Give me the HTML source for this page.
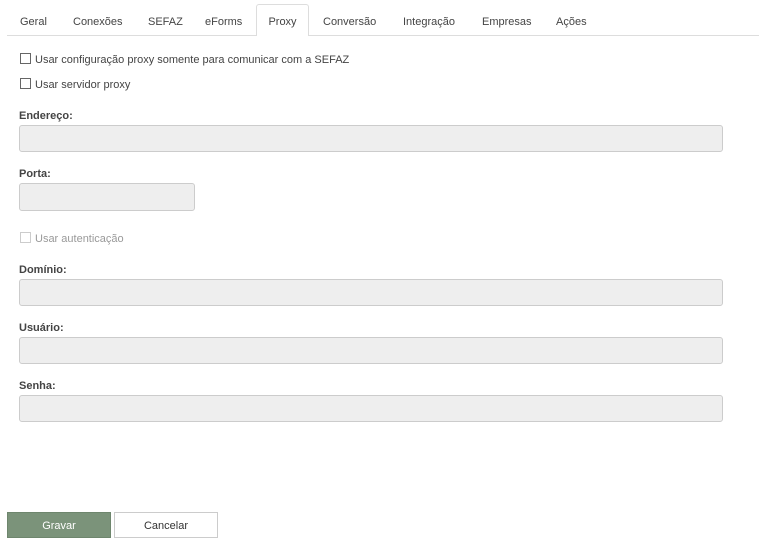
<!DOCTYPE html>
<html><head><meta charset="utf-8"><style>
body{margin:0;width:759px;height:542px;background:#fff;font-family:"Liberation Sans",sans-serif;font-size:11px;color:#333;position:relative;overflow:hidden}
.a{position:absolute}
.tab{position:absolute;top:16px;color:#444;font-size:11px}
.line{position:absolute;left:7px;right:0;top:35px;height:1px;background:#ddd}
.ptab{position:absolute;left:256px;top:4px;width:51px;height:31px;border:1px solid #ddd;border-bottom:none;background:#fff;border-radius:3px 3px 0 0;text-align:center;line-height:34px;color:#444}
.cb{position:absolute;left:20px;width:9px;height:9px;border:1px solid #666;background:#fff}
.lbl{position:absolute;left:19px;font-weight:bold;color:#444}
.inp{position:absolute;left:19px;width:702px;height:25px;background:#eee;border:1px solid #ccc;border-radius:3px}
.btn{position:absolute;top:512px;height:24px;width:102px;text-align:center;line-height:26px;font-size:11px}
</style></head><body>
<div class="line"></div>
<span class="tab" style="left:20px">Geral</span>
<span class="tab" style="left:73px">Conexões</span>
<span class="tab" style="left:148px">SEFAZ</span>
<span class="tab" style="left:205px">eForms</span>
<div class="ptab">Proxy</div>
<span class="tab" style="left:323px">Conversão</span>
<span class="tab" style="left:403px">Integração</span>
<span class="tab" style="left:482px">Empresas</span>
<span class="tab" style="left:556px">Ações</span>

<div class="cb" style="top:53px"></div><span class="a" style="left:35px;top:54px;color:#444">Usar configuração proxy somente para comunicar com a SEFAZ</span>
<div class="cb" style="top:78px"></div><span class="a" style="left:35px;top:79px;color:#444">Usar servidor proxy</span>

<span class="lbl" style="top:110px">Endereço:</span>
<div class="inp" style="top:125px"></div>
<span class="lbl" style="top:168px">Porta:</span>
<div class="inp" style="top:183px;width:174px;height:26px"></div>

<div class="cb" style="top:232px;border-color:#ccc"></div><span class="a" style="left:35px;top:233px;color:#999">Usar autenticação</span>

<span class="lbl" style="top:264px">Domínio:</span>
<div class="inp" style="top:279px"></div>
<span class="lbl" style="top:322px">Usuário:</span>
<div class="inp" style="top:337px"></div>
<span class="lbl" style="top:380px">Senha:</span>
<div class="inp" style="top:395px"></div>

<div class="btn" style="left:7px;background:#7b937a;color:#fff;border:1px solid #6e866d;width:102px">Gravar</div>
<div class="btn" style="left:114px;background:#fff;color:#333;border:1px solid #ccc">Cancelar</div>
</body></html>
